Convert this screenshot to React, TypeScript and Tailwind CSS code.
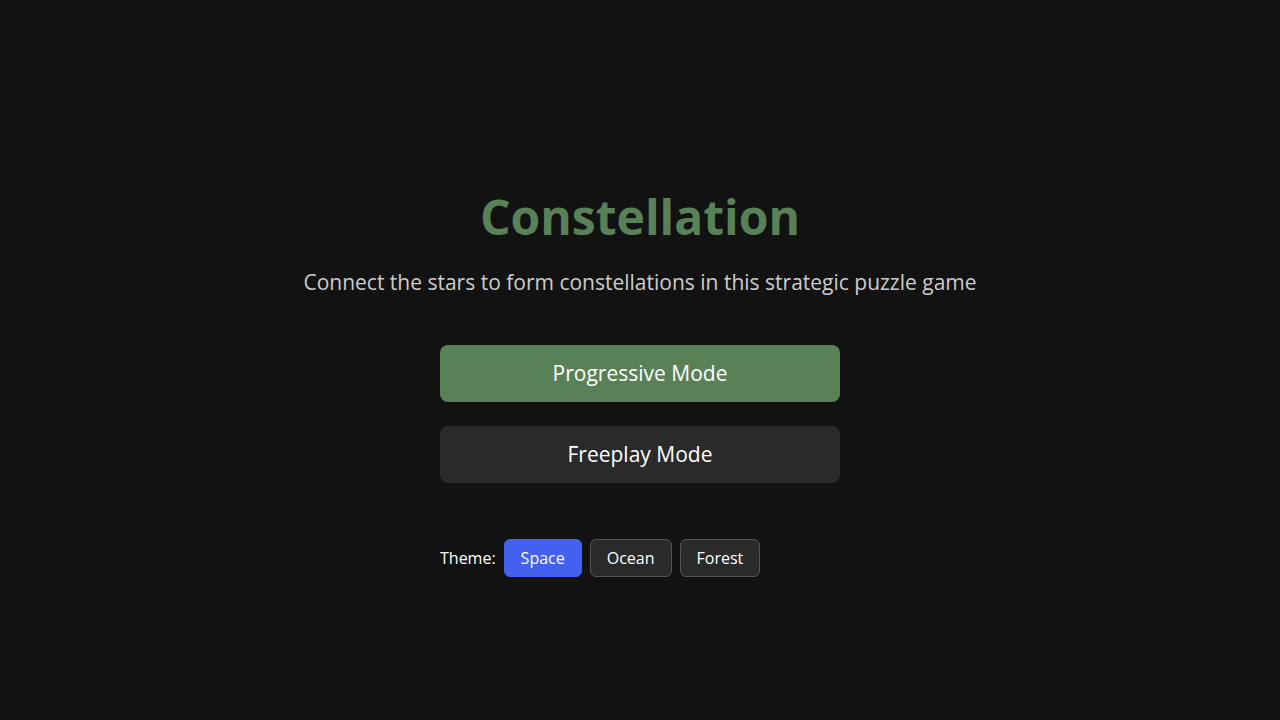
import { useState } from 'react';

const themes = ['Space', 'Ocean', 'Forest'];

export default function App() {
  const [theme, setTheme] = useState('Space');

  return (
    <main className="min-h-screen bg-[#121212] text-white font-['Open_Sans','Noto_Sans',sans-serif] flex flex-col items-center justify-center px-4 pt-10">
      <h1 className="text-5xl leading-[68px] font-bold text-[#588157] mb-4">Constellation</h1>
      <p className="text-[21px] leading-[30px] text-[#cccccc] text-center mb-12">
        Connect the stars to form constellations in this strategic puzzle game
      </p>

      <div className="w-full max-w-[400px] flex flex-col gap-6">
        <button className="h-[57px] rounded-lg bg-[#588157] text-[21px]">Progressive Mode</button>
        <button className="h-[57px] rounded-lg bg-[#2a2a2a] text-[21px]">Freeplay Mode</button>

        <div role="group" aria-labelledby="theme-label" className="flex items-center gap-2 mt-8">
          <span id="theme-label">Theme:</span>
          {themes.map((name) => (
            <button
              key={name}
              onClick={() => setTheme(name)}
              aria-pressed={theme === name}
              className={`px-4 h-[38px] rounded-md border ${
                theme === name ? 'bg-[#4361ee] border-[#4361ee]' : 'bg-[#2a2a2a] border-[#555555]'
              }`}
            >
              {name}
            </button>
          ))}
        </div>
      </div>
    </main>
  );
}
